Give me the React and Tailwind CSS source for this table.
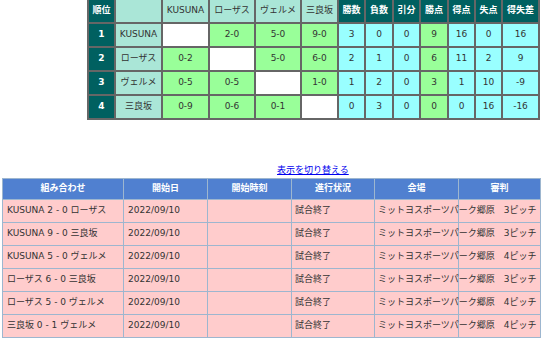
import React from "react";

const teams = ["KUSUNA", "ローザス", "ヴェルメ", "三良坂"];
const stats = ["勝数", "負数", "引分", "勝点", "得点", "失点", "得失差"];
const rows = [
  { rank: 1, name: "KUSUNA", scores: [null, "2-0", "5-0", "9-0"], st: [3, 0, 0, 9, 16, 0, 16] },
  { rank: 2, name: "ローザス", scores: ["0-2", null, "5-0", "6-0"], st: [2, 1, 0, 6, 11, 2, 9] },
  { rank: 3, name: "ヴェルメ", scores: ["0-5", "0-5", null, "1-0"], st: [1, 2, 0, 3, 1, 10, -9] },
  { rank: 4, name: "三良坂", scores: ["0-9", "0-6", "0-1", null], st: [0, 3, 0, 0, 0, 16, -16] },
];

const matches = [
  ["KUSUNA 2 - 0 ローザス", "3ピッチ"],
  ["KUSUNA 9 - 0 三良坂", "3ピッチ"],
  ["KUSUNA 5 - 0 ヴェルメ", "4ピッチ"],
  ["ローザス 6 - 0 三良坂", "3ピッチ"],
  ["ローザス 5 - 0 ヴェルメ", "4ピッチ"],
  ["三良坂 0 - 1 ヴェルメ", "4ピッチ"],
];

const cell = "flex items-center justify-center whitespace-nowrap";
const td = "h-[23px] whitespace-nowrap border-b border-r border-[#9db6cf] bg-[#ffcccc] py-0";

export default function App() {
  return (
    <div
      className="w-[542px] h-[339px] overflow-hidden bg-white text-[9px] text-[#333] antialiased"
      style={{ fontFamily: '"DejaVu Sans", "Noto Sans CJK JP", sans-serif' }}
    >
      <div className="pl-[87px]">
        <div className="grid w-max grid-cols-[25px_45px_45px_44px_44px_35px_25px_26px_25px_26px_25px_25px_35px] auto-rows-[22px] gap-[2px] bg-[#666] px-[2px] pb-[2px]">
          <div className={`${cell} bg-[#006060] font-bold text-white`}>順位</div>
          <div className={`${cell} bg-[#aae6d7]`}></div>
          {teams.map((t) => (
            <div key={t} className={`${cell} bg-[#aae6d7]`}>{t}</div>
          ))}
          {stats.map((s) => (
            <div key={s} className={`${cell} bg-[#006060] font-bold text-white`}>{s}</div>
          ))}
          {rows.map((r) => (
            <React.Fragment key={r.rank}>
              <div className={`${cell} bg-[#006060] font-bold text-white`}>{r.rank}</div>
              <div className={`${cell} bg-[#aae6d7]`}>{r.name}</div>
              {r.scores.map((s, i) => (
                <div key={i} className={`${cell} ${s ? "bg-[#99ff99]" : "bg-white"}`}>{s}</div>
              ))}
              {r.st.map((v, i) => (
                <div key={i} className={`${cell} ${i === 3 ? "bg-[#99ff99]" : "bg-[#99ffff]"}`}>{v}</div>
              ))}
            </React.Fragment>
          ))}
        </div>
      </div>

      <div className="mt-[44px] h-[12px] pl-[277px] leading-[12px]">
        <a href="#" className="text-[#0000ee] underline">表示を切り替える</a>
      </div>

      <table className="ml-[2px] mt-[2px] w-[539px] table-fixed border-separate border-spacing-0 border-l border-t border-[#9db6cf]">
        <colgroup>
          <col className="w-[121px]" />
          <col className="w-[84px]" />
          <col className="w-[84px]" />
          <col className="w-[83px]" />
          <col className="w-[84px]" />
          <col className="w-[82px]" />
        </colgroup>
        <thead>
          <tr>
            {["組み合わせ", "開始日", "開始時刻", "進行状況", "会場", "審判"].map((h) => (
              <th
                key={h}
                className="h-[21px] border-b border-r border-[#9db6cf] bg-[#5080d0] p-0 text-center font-bold text-white"
              >
                {h}
              </th>
            ))}
          </tr>
        </thead>
        <tbody>
          {matches.map(([m, p]) => (
            <tr key={m}>
              <td className={`${td} pl-[4px]`}>{m}</td>
              <td className={`${td} pl-[4px]`}>2022/09/10</td>
              <td className={`${td} p-0`}></td>
              <td className={`${td} pl-[3px]`}>試合終了</td>
              <td className={`${td} pl-[3px]`}>ミットヨスポーツパーク郷原　{p}</td>
              <td className={`${td} p-0`}></td>
            </tr>
          ))}
        </tbody>
      </table>
    </div>
  );
}
